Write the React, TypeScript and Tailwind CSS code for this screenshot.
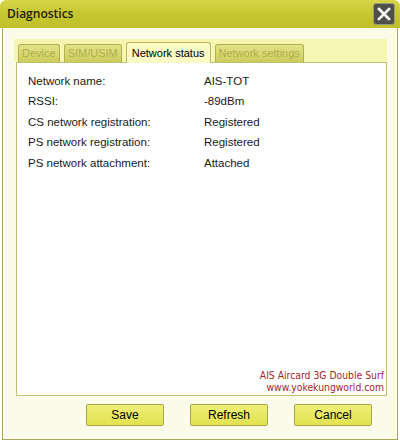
import React from 'react';

const rows: [string, string][] = [
  ['Network name:', 'AIS-TOT'],
  ['RSSI:', '-89dBm'],
  ['CS network registration:', 'Registered'],
  ['PS network registration:', 'Registered'],
  ['PS network attachment:', 'Attached'],
];

const tabs = ['Device', 'SIM/USIM', 'Network status', 'Network settings'];

function Tab({ label, active }: { label: string; active: boolean }) {
  if (active) {
    return (
      <div className="relative z-10 -mb-px h-[21px] px-[5px] flex items-center rounded-t-[3px] border border-b-0 border-[#b8b860] bg-[#fafac4] text-[11px] text-black">
        {label}
      </div>
    );
  }
  return (
    <div className="h-[18px] px-[3px] flex items-center rounded-t-[3px] border border-b-0 border-[#b0b050] bg-gradient-to-b from-[#e2e288] to-[#cccc5c] text-[11px] text-[#a9a93e] [text-shadow:0_0_1px_#e8e890]">
      {label}
    </div>
  );
}

function Button({ label }: { label: string }) {
  return (
    <button className="w-[78px] h-[22px] rounded-[2px] border border-[#a8a848] bg-gradient-to-b from-[#efef78] to-[#e2e24e] text-[12px] text-black">
      {label}
    </button>
  );
}

export default function App() {
  return (
    <div className="w-[400px] h-[443px] flex flex-col bg-white font-['Liberation_Sans',Arial,sans-serif]">
      <div className="h-[28px] shrink-0 flex items-center justify-between pl-[7px] pr-[5px] rounded-t-[6px] bg-gradient-to-b from-[#d6d648] via-[#c6c630] to-[#c0c02a]">
        <span className="text-[12px] font-semibold text-[#1c1c10] font-['Open_Sans',sans-serif]">Diagnostics</span>
        <div className="w-[22px] h-[22px] rounded-[3px] bg-[#50504a] border border-[#9a9a80] flex items-center justify-center">
          <svg width="14" height="14" viewBox="0 0 14 14">
            <path d="M2 2 L12 12 M12 2 L2 12" stroke="white" strokeWidth="2.6" strokeLinecap="square" />
          </svg>
        </div>
      </div>
      <div className="flex-1 mx-[2px] mb-[3px] flex flex-col border-x border-b border-[#a8a858] bg-[#fbfbea]">
        <div className="mt-[11px] ml-[11px] mr-[10px] flex flex-col">
          <div className="h-[23px] flex items-end gap-[4px] pl-[4px] bg-[#f6f6b2]">
            {tabs.map((t) => (
              <Tab key={t} label={t} active={t === 'Network status'} />
            ))}
          </div>
          <div className="h-[334px] ml-[2px] flex flex-col justify-between border border-[#c0c070] bg-white">
            <div className="pt-[8px] pl-[11px] text-[11.5px] text-[#1a1a1a]">
              {rows.map(([k, v]) => (
                <div key={k} className="flex h-[20.5px] items-center">
                  <span className="w-[176px]">{k}</span>
                  <span>{v}</span>
                </div>
              ))}
            </div>
            <div className="pr-[2px] pb-[2px] flex flex-col items-end text-[10.3px] leading-[12px] text-[#a02828] font-['DejaVu_Sans_Condensed','DejaVu_Sans',sans-serif]">
              <span>AIS Aircard 3G Double Surf</span>
              <span>www.yokekungworld.com</span>
            </div>
          </div>
        </div>
        <div className="mt-[8px] flex justify-end gap-[26px] pr-[25px]">
          <Button label="Save" />
          <Button label="Refresh" />
          <Button label="Cancel" />
        </div>
      </div>
    </div>
  );
}
